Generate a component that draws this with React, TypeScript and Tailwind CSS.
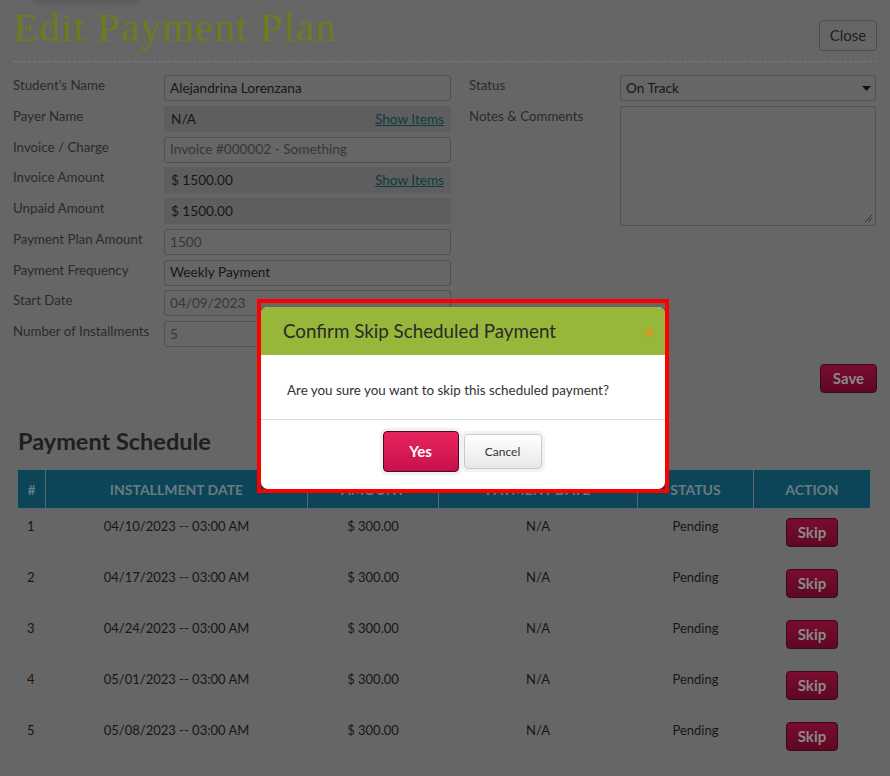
import React from "react";

type Field = {
  label: string;
  value: string;
  kind: "input" | "disabled" | "readonly";
  link?: boolean;
};

const fields: Field[] = [
  { label: "Student's Name", value: "Alejandrina Lorenzana", kind: "input" },
  { label: "Payer Name", value: "N/A", kind: "readonly", link: true },
  { label: "Invoice / Charge", value: "Invoice #000002 - Something", kind: "disabled" },
  { label: "Invoice Amount", value: "$ 1500.00", kind: "readonly", link: true },
  { label: "Unpaid Amount", value: "$ 1500.00", kind: "readonly" },
  { label: "Payment Plan Amount", value: "1500", kind: "disabled" },
  { label: "Payment Frequency", value: "Weekly Payment", kind: "input" },
  { label: "Start Date", value: "04/09/2023", kind: "disabled" },
  { label: "Number of Installments", value: "5", kind: "disabled" },
];

const schedule = [
  { n: 1, date: "04/10/2023 -- 03:00 AM" },
  { n: 2, date: "04/17/2023 -- 03:00 AM" },
  { n: 3, date: "04/24/2023 -- 03:00 AM" },
  { n: 4, date: "05/01/2023 -- 03:00 AM" },
  { n: 5, date: "05/08/2023 -- 03:00 AM" },
];

const font = "font-['Lato','Open_Sans',sans-serif]";

function FieldBox({ field }: Readonly<{ field: Field }>) {
  if (field.kind === "readonly") {
    return (
      <div className="flex h-[26px] w-[287px] items-center justify-between bg-[#5e5e5e] px-[7px] text-[13.6px] text-[#161616]">
        <span>{field.value}</span>
        {field.link && <span className="text-[#0d3b40] underline">Show Items</span>}
      </div>
    );
  }
  return (
    <div
      className={
        "flex h-[26px] w-[287px] items-center rounded-[3px] border border-[#505050] px-[5px] text-[13.6px] " +
        (field.kind === "disabled" ? "text-[#363636]" : "text-[#161616]")
      }
    >
      {field.value}
    </div>
  );
}

export default function App() {
  return (
    <div className={`relative h-[776px] w-[890px] overflow-hidden bg-[#666666] ${font}`}>
      <div className="absolute left-[32px] top-[-10px] h-[12px] w-[108px] rounded-b-[6px] bg-[#555] blur-[3px]" />

      {/* header */}
      <div className="flex items-start justify-between px-[13px] pt-[4px]">
        <h1 className="font-['Liberation_Serif','DejaVu_Serif',serif] text-[41px] leading-[46px] tracking-[1.1px] text-[#6f7b1c]">
          Edit Payment Plan
        </h1>
        <button className="mr-0 mt-[16px] h-[31px] w-[58px] rounded-[4px] border border-[#4e4e4e] text-[15px] text-[#1f1f1f]">
          Close
        </button>
      </div>
      <div className="mx-[13px] mt-[10px] border-t border-dashed border-[#7a7a7a]" />

      {/* form */}
      <div className="mt-[13px] flex px-[13px]">
        <div className="flex w-[438px] flex-col gap-[4.75px]">
          {fields.map((f) => (
            <div key={f.label} className="flex items-start">
              <span className="w-[151px] text-[13.3px] leading-[20px] text-[#2b2b2b]">{f.label}</span>
              <FieldBox field={f} />
            </div>
          ))}
        </div>
        <div className="ml-[18px] flex flex-col gap-[4.75px]">
          <div className="flex items-start">
            <span className="w-[151px] text-[13.3px] leading-[20px] text-[#2b2b2b]">Status</span>
            <div className="flex h-[26px] w-[256px] items-center justify-between rounded-[3px] border border-[#505050] pl-[5px] pr-[4px] text-[13.6px] text-[#161616]">
              <span>On Track</span>
              <svg width="9" height="5" viewBox="0 0 9 5">
                <path d="M0 0h9L4.5 5z" fill="#111" />
              </svg>
            </div>
          </div>
          <div className="flex items-start">
            <span className="w-[151px] text-[13.3px] leading-[20px] text-[#2b2b2b]">Notes &amp; Comments</span>
            <div className="relative h-[120px] w-[256px] rounded-[3px] border border-[#505050]">
              <svg className="absolute bottom-[2px] right-[2px]" width="9" height="9" viewBox="0 0 9 9">
                <path d="M1 8L8 1M4 8L8 4" stroke="#333" strokeWidth="1" />
              </svg>
            </div>
          </div>
        </div>
      </div>

      <div className="mt-[17px] flex justify-end pr-[13px]">
        <button className="h-[29px] w-[57px] rounded-[4px] border border-[#3a0a1c] bg-gradient-to-b from-[#7a0c30] to-[#5e0822] text-[15px] font-bold text-[#8a8a8a]">
          Save
        </button>
      </div>

      {/* schedule */}
      <h2 className="ml-[18px] mt-[34px] text-[23.5px] font-bold leading-[28px] text-[#1f1f1f]">Payment Schedule</h2>
      <table className="ml-[17px] mt-[14px] w-[854px] border-collapse text-[13px] text-[#161616]">
        <thead>
          <tr className="h-[39px] bg-[#0b4557] text-[14px] font-bold uppercase text-[#6a7a82]">
            <th className="w-[28px] border border-[#5b6a6e]">#</th>
            <th className="w-[262px] border border-[#5b6a6e]">Installment Date</th>
            <th className="w-[131px] border border-[#5b6a6e]">Amount</th>
            <th className="w-[199px] border border-[#5b6a6e]">Payment Date</th>
            <th className="w-[116px] border border-[#5b6a6e]">Status</th>
            <th className="border border-[#5b6a6e]">Action</th>
          </tr>
        </thead>
        <tbody>
          {schedule.map((r) => (
            <tr key={r.n} className="h-[51px] align-top">
              <td className="border border-[#5b6a6e] pl-[9px] pt-[8px]">{r.n}</td>
              <td className="border border-[#5b6a6e] pt-[8px] text-center">{r.date}</td>
              <td className="border border-[#5b6a6e] pt-[8px] text-center">$ 300.00</td>
              <td className="border border-[#5b6a6e] pt-[8px] text-center">N/A</td>
              <td className="border border-[#5b6a6e] pt-[8px] text-center">Pending</td>
              <td className="border border-[#5b6a6e] pt-[9px] text-center">
                <button className="h-[29px] w-[52px] rounded-[4px] border border-[#3a0a1c] bg-gradient-to-b from-[#7a0c30] to-[#5e0822] text-[15px] font-bold text-[#8a8a8a]">
                  Skip
                </button>
              </td>
            </tr>
          ))}
        </tbody>
      </table>

      {/* confirm dialog */}
      <div className="absolute left-[257px] top-[299px] h-[194px] w-[412px] border-[4px] border-[#ff0000] pt-[4px]">
        <div className="h-full overflow-hidden rounded-[7px] bg-white">
          <div className="flex h-[48px] items-center justify-between bg-[#97b73a] pl-[22px] pr-[11px]">
            <span className="text-[18.8px] text-[#2a2a2a]">Confirm Skip Scheduled Payment</span>
            <svg className="mt-[2px]" width="9" height="9" viewBox="0 0 9 9">
              <path d="M1.5 1.5l6 6M7.5 1.5l-6 6" stroke="#e8901f" strokeWidth="2.4" strokeLinecap="round" />
            </svg>
          </div>
          <p className="px-[26px] pt-[26px] text-[13.4px] leading-[18px] text-[#333]">
            Are you sure you want to skip this scheduled payment?
          </p>
          <div className="mt-[20px] border-t border-[#dedede]" />
          <div className="mt-[11px] flex items-center justify-center gap-[5px] pr-[2px]">
            <button className="h-[41px] w-[76px] rounded-[4px] border border-[#4a0a22] bg-gradient-to-b from-[#e8245f] to-[#c7104a] text-[15px] font-bold text-white ring-[3px] ring-[#f0f0f0]">
              Yes
            </button>
            <button className="h-[35px] w-[78px] rounded-[4px] border border-[#c9c9c9] bg-gradient-to-b from-white to-[#e8e8e8] text-[12px] text-[#333] ring-[3px] ring-[#f2f2f2]">
              Cancel
            </button>
          </div>
        </div>
      </div>
    </div>
  );
}
